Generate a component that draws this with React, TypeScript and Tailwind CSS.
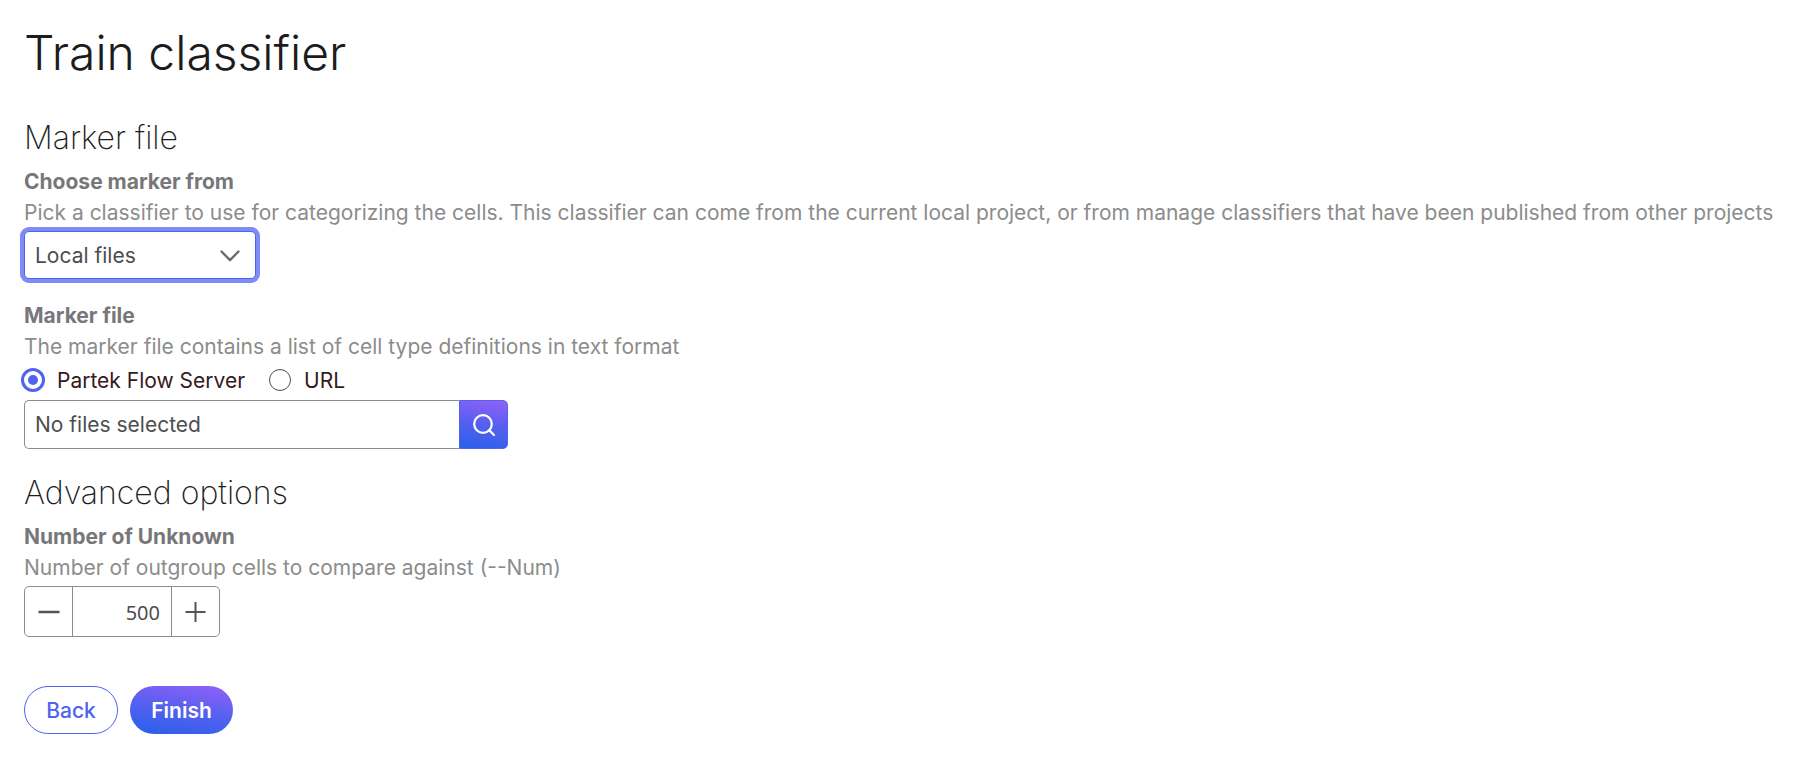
import { useState } from "react";
import type { ReactNode } from "react";
import clsx from "clsx";

function Section({ title, children }: { title: string; children: ReactNode }) {
  return (
    <section>
      <h2 className="text-[32px] leading-10 font-[250] text-[#1c1c1e]">{title}</h2>
      <div className="mt-2 flex flex-col gap-[21px]">{children}</div>
    </section>
  );
}

function FieldText({ label, htmlFor, hint }: { label: string; htmlFor: string; hint: string }) {
  return (
    <div className="leading-[31px]">
      <label htmlFor={htmlFor} className="block font-bold text-[#77777a]">
        {label}
      </label>
      <p className="text-[#8c8c8c]">{hint}</p>
    </div>
  );
}

function SourceRadio({
  label,
  checked,
  onChange,
}: {
  label: string;
  checked: boolean;
  onChange: () => void;
}) {
  return (
    <label className="flex items-center gap-3">
      <span className="relative grid size-6 place-items-center">
        <input
          type="radio"
          name="source"
          checked={checked}
          onChange={onChange}
          className={clsx(
            "appearance-none rounded-full bg-white",
            checked ? "size-6 border-3 border-[#4f63f0]" : "size-[22px] border border-[#4d4d4d]",
          )}
        />
        {checked && <span className="pointer-events-none absolute size-[10px] rounded-full bg-[#4f63f0]" />}
      </span>
      <span className="pt-0.5">{label}</span>
    </label>
  );
}

export default function App() {
  const [source, setSource] = useState("server");
  const [count, setCount] = useState(500);

  return (
    <main className="px-6 pt-6 pb-6 font-['Inter',sans-serif] text-[21px]">
      <h1 className="text-[48px] leading-[58px] font-light text-[#1c1c1e]">Train classifier</h1>

      <form className="mt-9 flex flex-col gap-6" onSubmit={(e) => e.preventDefault()}>
        <Section title="Marker file">
          <div>
            <FieldText
              label="Choose marker from"
              htmlFor="marker-from"
              hint="Pick a classifier to use for categorizing the cells. This classifier can come from the current local project, or from manage classifiers that have been published from other projects"
            />
            <div className="relative mt-[3px] w-[232px]">
              <select
                id="marker-from"
                className="block h-12 w-full appearance-none rounded-[5px] border border-[#4f63f0] bg-white px-[10px] pt-0.5 text-[#4d4d50] ring-4 ring-[#7d8cf7] outline-none"
              >
                <option>Local files</option>
                <option>Managed classifiers</option>
              </select>
              <svg
                viewBox="0 0 20 12"
                className="pointer-events-none absolute top-[19px] right-4 h-3 w-5"
                fill="none"
                stroke="#6b6b70"
                strokeWidth="2.4"
                strokeLinecap="round"
                strokeLinejoin="round"
              >
                <path d="M1.5 1.5 10 10.2 18.5 1.5" />
              </svg>
            </div>
          </div>

          <div>
            <FieldText
              label="Marker file"
              htmlFor="marker-file"
              hint="The marker file contains a list of cell type definitions in text format"
            />
            <div className="mb-0.5 -ml-[3px] flex h-9 items-center gap-[23px] text-[#35191e]">
              <SourceRadio
                label="Partek Flow Server"
                checked={source === "server"}
                onChange={() => setSource("server")}
              />
              <SourceRadio label="URL" checked={source === "url"} onChange={() => setSource("url")} />
            </div>
            <div className="flex h-[49px] w-[484px]">
              <input
                id="marker-file"
                readOnly
                value="No files selected"
                className="min-w-0 flex-1 rounded-l-[5px] border border-r-0 border-[#8c8c8c] px-[10px] text-[#4d4d50] outline-none"
              />
              <button
                type="button"
                aria-label="Browse files"
                className="grid w-[49px] place-items-center rounded-r-[5px] border border-[#4f63f0] bg-linear-[10deg,#2760ea,#5560f0_50%,#9560f8] bg-origin-border"
              >
                <svg
                  viewBox="0 0 22 22"
                  className="size-[22px]"
                  fill="none"
                  stroke="white"
                  strokeWidth="2.2"
                  strokeLinecap="round"
                >
                  <circle cx="10" cy="10" r="8.8" />
                  <path d="m16.4 16.4 4.6 4.6" />
                </svg>
              </button>
            </div>
          </div>
        </Section>

        <Section title="Advanced options">
          <div>
            <FieldText
              label="Number of Unknown"
              htmlFor="unknown"
              hint="Number of outgroup cells to compare against (--Num)"
            />
            <div className="mt-[3px] flex h-[51px] w-[196px] overflow-hidden rounded-[5px] border border-[#8c8c8c] text-[#555]">
              <button
                type="button"
                aria-label="Decrease"
                onClick={() => setCount(count - 1)}
                className="grid w-[47px] place-items-center"
              >
                <svg viewBox="0 0 22 22" className="size-[22px]" stroke="currentColor" strokeWidth="2.4">
                  <path d="M.5 11h21" />
                </svg>
              </button>
              <input
                id="unknown"
                inputMode="numeric"
                value={count}
                onChange={(e) => setCount(Number(e.target.value) || 0)}
                className="min-w-0 flex-1 border-x border-[#8c8c8c] px-[11px] pt-0.5 text-right font-['Noto_Sans',sans-serif] text-[20px] text-[#4d4d50] outline-none"
              />
              <button
                type="button"
                aria-label="Increase"
                onClick={() => setCount(count + 1)}
                className="grid w-[47px] place-items-center"
              >
                <svg viewBox="0 0 22 22" className="size-[22px]" stroke="currentColor" strokeWidth="2">
                  <path d="M.5 11h20M10.5 1v20" />
                </svg>
              </button>
            </div>
          </div>
        </Section>

        <div className="mt-[25px] flex gap-3 font-medium">
          <button type="button" className="h-12 w-[94px] rounded-full border border-[#4f63f0] pt-0.5 text-[#4f63f0]">
            Back
          </button>
          <button
            type="submit"
            className="h-12 w-[103px] rounded-full bg-linear-[10deg,#2760ea,#5560f0_50%,#9560f8] pt-0.5 font-semibold text-white"
          >
            Finish
          </button>
        </div>
      </form>
    </main>
  );
}
